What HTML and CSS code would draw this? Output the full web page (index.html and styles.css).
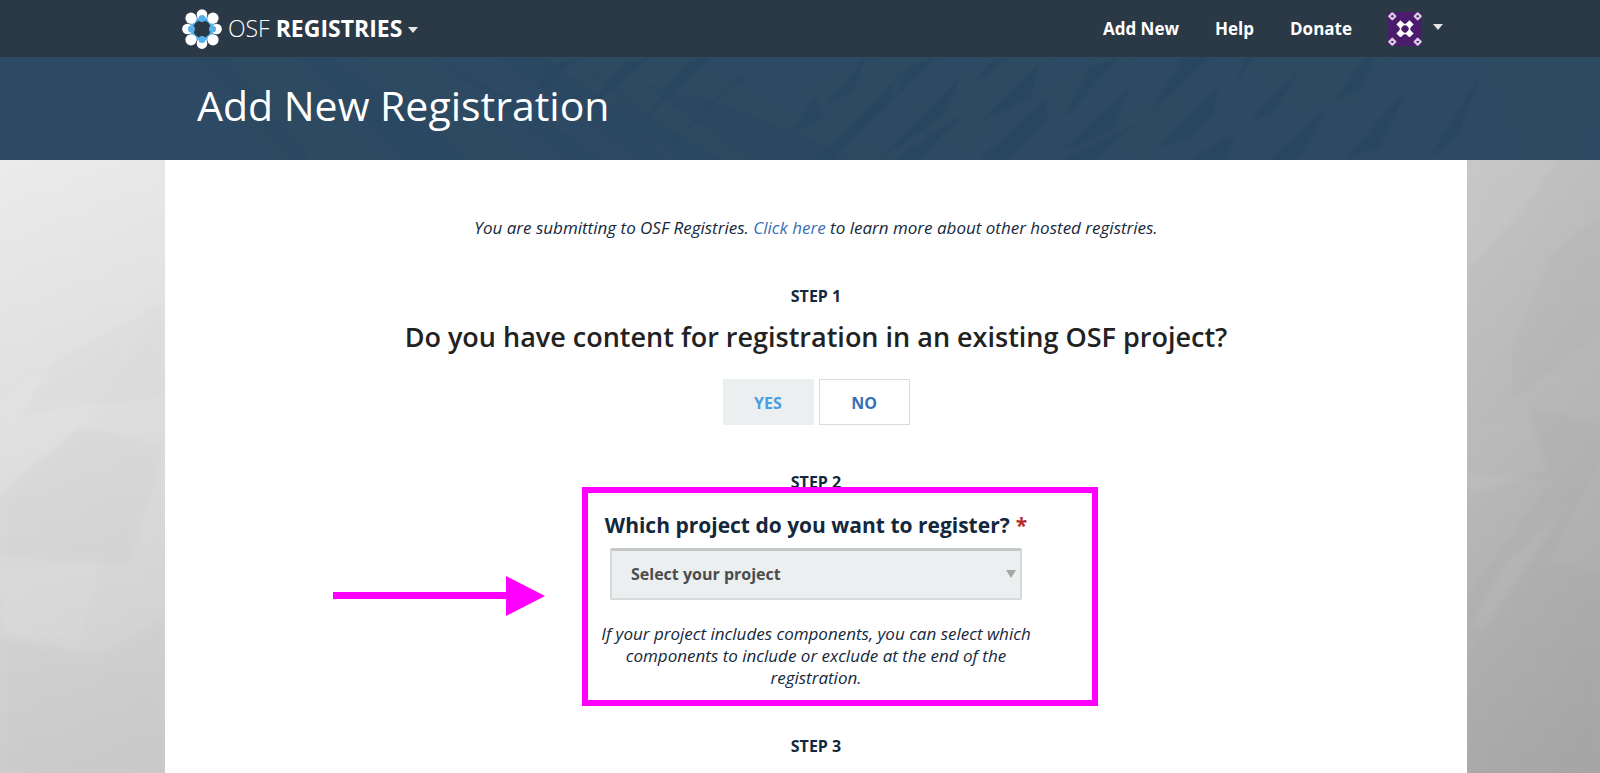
FILE: index.html
```html
<!DOCTYPE html>
<html lang="en">
<head>
<meta charset="utf-8">
<title>OSF Registries | Add New Registration</title>
<link rel="stylesheet" href="styles.css">
</head>
<body>
<nav class="navbar">
  <button class="brand" type="button">
    <svg class="brand-logo" viewBox="0 0 40 40" aria-hidden="true">
      <circle cx="20" cy="20" r="11" fill="none" stroke="#58b0ea" stroke-width="4"/>
      <g fill="#fff">
        <circle cx="20" cy="5.500" r="5.300"/><circle cx="31" cy="9.200" r="5.600"/><circle cx="34.600" cy="20" r="5.300"/><circle cx="31" cy="30.800" r="5.600"/>
        <circle cx="20" cy="34.600" r="5.300"/><circle cx="9" cy="30.800" r="5.600"/><circle cx="5.400" cy="20" r="5.300"/><circle cx="9" cy="9.200" r="5.600"/>
      </g>
      <g fill="#58b0ea">
        <circle cx="20" cy="9.500" r="3.500"/><circle cx="30.500" cy="20" r="3.500"/><circle cx="20" cy="30.500" r="3.500"/><circle cx="9.500" cy="20" r="3.500"/>
      </g>
    </svg>
    <span class="brand-name">OSF <b>REGISTRIES</b></span>
    <span class="caret"></span>
  </button>
  <div class="nav-links">
    <a href="#">Add New</a>
    <a href="#">Help</a>
    <a href="#">Donate</a>
    <button class="account" type="button" aria-label="Account menu">
      <svg class="avatar" viewBox="0 0 34 34" aria-hidden="true">
        <path fill="#4c1c6c" d="M0 0h34v34H0z"/>
        <path fill="#fff" stroke="#fff" stroke-linejoin="round" d="M12.500 8.800l3.600 3.600-3.600 3.600-3.600-3.600zM21.500 8.800l3.600 3.600-3.600 3.600-3.600-3.600zM12.500 17.800l3.600 3.600-3.600 3.600-3.600-3.600zM21.500 17.800l3.600 3.600-3.600 3.600-3.600-3.600z"/>
        <path fill="none" stroke="#fff" stroke-width="1.500" d="M12.500 12.400h9v9h-9z"/>
        <g fill="none" stroke="#d9cce2" stroke-width="2.200" stroke-linejoin="round"><path d="M4.300 1.300l3 3-3 3-3-3zM29.700 1.300l3 3-3 3-3-3zM4.300 26.700l3 3-3 3-3-3zM29.700 26.700l3 3-3 3-3-3z"/></g>
      </svg>
      <span class="caret"></span>
    </button>
  </div>
</nav>

<header class="page-header">
  <svg class="header-art" viewBox="0 0 1600 103" preserveAspectRatio="none" aria-hidden="true">
    <g fill="#2e4c5f" opacity=".45">
      <path d="M195 0h100l90 103H275zM360 0h70l100 103h-60zM520 0h170l120 60 100 43H720zM800 30l80-30h60l-110 90zM900 60l90-60h60l-80 100zM1040 30l60-30h30l-70 60zM1080 85l80-50 40-10-50 78zM1240 0h150l-30 45-70 10zM1480 0h120v60l-20 43h-60z"/>
    </g>
    <g fill="#27455f" opacity=".7">
      <path d="M200 0l90 103h20L225 0zM305 0l100 103h65L330 0zM435 0l105 60 60 43h-30zM500 0l140 103h40L545 0zM580 0l70 60 70 43h-55zM640 25l90 25 130 53H750z" opacity=".35"/>
      <path d="M580 0l-40 32 8-22zM650 0l-70 60 46-54zM710 0l-65 62 43-58zM760 5l-95 88 67-66zM865 0l-40 50 28-16zM935 0l-42 42 16-32zM1010 0l-40 30 22-26zM815 40l-25 38 35-18zM900 17l-75 80 60-46zM960 20l-80 82 64-44zM1040 5l-60 60 50-26zM1120 0l-56 60 25-50zM1210 0l-60 57 22-37 12-20zM1255 0l-18 24 10-24zM1300 13l-50 52 24-12zM1365 0l-30 44 28-14 10-30z"/>
      <path d="M885 45l-70 58h18zM965 55l-70 48h22zM1045 43l-65 60h28l40-40zM1130 30l-65 62 45-17zM1218 32l-60 58 32-10 22-22zM1136 66l-72 37h30zM1235 77l-45 26h36zM1325 53l-55 50h28zM1405 35l-58 65 32-9zM1480 20l-50 80 28-23z"/>
    </g>
  </svg>
  <h1 class="page-title">Add New Registration</h1>
</header>

<div class="page-body">
  <svg class="body-art" viewBox="0 0 1600 613" preserveAspectRatio="none" aria-hidden="true">
    <g fill="#fff" opacity=".06">
      <path d="M0 0h16L0 15zM0 240l160-90-75 115L0 325zM0 410l100-10-20 80-75-5zM1467 0h90l-35 50-55 60zM1467 275l60-30 20 65-80 25zM1467 470l40-70 60-55-80 120z"/>
    </g>
    <g opacity=".012">
      <path d="M165 140L50 205l-30 50 145-20zM165 285L80 265 0 335v60l130 10zM165 455l-65 40-100-20v138h165zM1600 55l-50 40-38 90v55l88-65zM1600 265l-75-20-58 30v40l80 5zM1600 270l-60 65-73 100v50l80-80 53-105zM1600 410l-65-10-68 95v118h133zM1600 470l-90-10-43 55v98h133z"/>
    </g>
  </svg>
  <main class="panel">
    <p class="note">You are submitting to OSF Registries. <a href="#">Click here</a> to learn more about other hosted registries.</p>

    <section class="step">
      <h2 class="step-label">STEP 1</h2>
      <p class="question">Do you have content for registration in an existing OSF project?</p>
      <div class="choices">
        <button class="choice choice-active" type="button">YES</button>
        <button class="choice" type="button">NO</button>
      </div>
    </section>

    <section class="step">
      <h2 class="step-label">STEP 2</h2>
      <div class="project-form">
        <label class="project-label" for="project">Which project do you want to register? <span class="required">*</span></label>
        <div class="select-wrap">
          <select class="project-select" id="project"><option>Select your project</option></select>
          <span class="select-arrow"></span>
        </div>
        <p class="note">If your project includes components, you can select which components to include or exclude at the end of the registration.</p>
        <div class="highlight"></div>
        <svg class="pointer" viewBox="0 0 212 40" aria-hidden="true"><path fill="#f0f" d="M0 16h173V0l39 20-39 20V23H0z"/></svg>
      </div>
    </section>

    <section class="step">
      <h2 class="step-label">STEP 3</h2>
    </section>
  </main>
</div>
</body>
</html>
```
FILE: styles.css
```css
* { box-sizing: border-box; }

body {
  margin: 0;
  min-height: 100vh;
  display: flex;
  flex-direction: column;
  font-family: "Open Sans", "Noto Sans", sans-serif;
  font-size: 16px;
  line-height: 22px;
  color: #14283c;
}

h1, h2, p { margin: 0; }
a { color: #3a6fb7; text-decoration: none; }
button { font: inherit; cursor: pointer; }

.navbar {
  display: flex;
  align-items: center;
  justify-content: space-between;
  height: 57px;
  padding: 0 157px 0 182px;
  background: #2b3947;
  color: #fff;
}

.brand, .account {
  display: flex;
  align-items: center;
  padding: 0;
  border: 0;
  background: none;
  color: inherit;
}

.brand-logo { width: 40px; height: 40px; margin-right: 6px; }
.brand-name { padding-bottom: 2px; font-size: 23px; line-height: 32px; font-weight: 300; }
.brand-name b { font-weight: 700; }

.caret {
  border: 5px solid transparent;
  border-top: 6px solid #e4e4e4;
  border-bottom: 0;
}
.brand .caret { margin-left: 6px; margin-top: 3px; }
.account .caret { margin-left: 11px; margin-bottom: 3px; }

.nav-links { display: flex; align-items: center; gap: 36px; }
.nav-links a { padding-top: 1px; color: #fff; font-size: 17px; font-weight: 700; }
.avatar { width: 34px; height: 34px; }

.page-header {
  position: relative;
  height: 103px;
  padding: 19px 133px 0 197px;
  background: #2d4963;
}
.header-art, .body-art {
  position: absolute;
  inset: 0;
  width: 100%;
  height: 100%;
}
.header-art path { filter: blur(1px); }
.body-art path { filter: blur(3px); }
.page-title {
  position: relative;
  color: #fff;
  font-size: 41px;
  line-height: 58px;
  font-weight: 400;
}

.page-body {
  position: relative;
  flex: 1;
  display: flex;
  padding: 0 133px 0 165px;
  background:
    linear-gradient(rgba(0, 0, 0, 0), rgba(0, 0, 0, .12)),
    linear-gradient(90deg, #ebebeb, #e8e8e8 10%, #c4c4c4 92%, #bebebe);
}

.panel {
  position: relative;
  flex: 1;
  display: flex;
  flex-direction: column;
  gap: 46px;
  padding: 57px 32px 17px;
  background: #fff;
  text-align: center;
}

.note { font-size: 17px; font-style: italic; }

.step { display: flex; flex-direction: column; align-items: center; }
.step-label { font-size: 16px; line-height: 22px; font-weight: 700; }

.question {
  margin-top: 11px;
  color: #222;
  font-size: 27px;
  line-height: 38px;
  font-weight: 600;
}

.choices { display: flex; gap: 5px; margin-top: 23px; }
.choice {
  width: 91px;
  height: 46px;
  padding: 2px 0 0;
  border: 1px solid #d9dcde;
  background: #fff;
  color: #3a6fb7;
  font-weight: 700;
}
.choice-active { border-color: #ebeff0; background: #ebeff0; color: #4a9fe3; }

.project-form { position: relative; width: 434px; margin-top: 16px; }
.project-label {
  display: flex;
  justify-content: center;
  gap: 6px;
  padding-top: 1px;
  font-size: 21px;
  line-height: 30px;
  font-weight: 700;
  white-space: nowrap;
}
.required { color: #b52b27; }

.select-wrap { position: relative; margin: 8px 11px 23px; }
.project-select {
  appearance: none;
  display: block;
  width: 100%;
  height: 52px;
  padding: 0 19px 2px;
  border: 2px solid #d7dadb;
  border-top: 3px solid #c5c8c8;
  border-radius: 2px;
  background: #ebeff0;
  color: #4c4c4c;
  font: 700 16px "Open Sans", "Noto Sans", sans-serif;
}
.select-arrow {
  position: absolute;
  right: 6px;
  top: 22px;
  border: 5px solid transparent;
  border-top: 8px solid #a5a5a5;
  border-bottom: 0;
  pointer-events: none;
}

.highlight {
  position: absolute;
  left: -17px;
  top: -22px;
  width: 516px;
  height: 219px;
  border: 6px solid #f0f;
  pointer-events: none;
}
.pointer {
  position: absolute;
  left: -266px;
  top: 67px;
  width: 212px;
  height: 40px;
}
```
